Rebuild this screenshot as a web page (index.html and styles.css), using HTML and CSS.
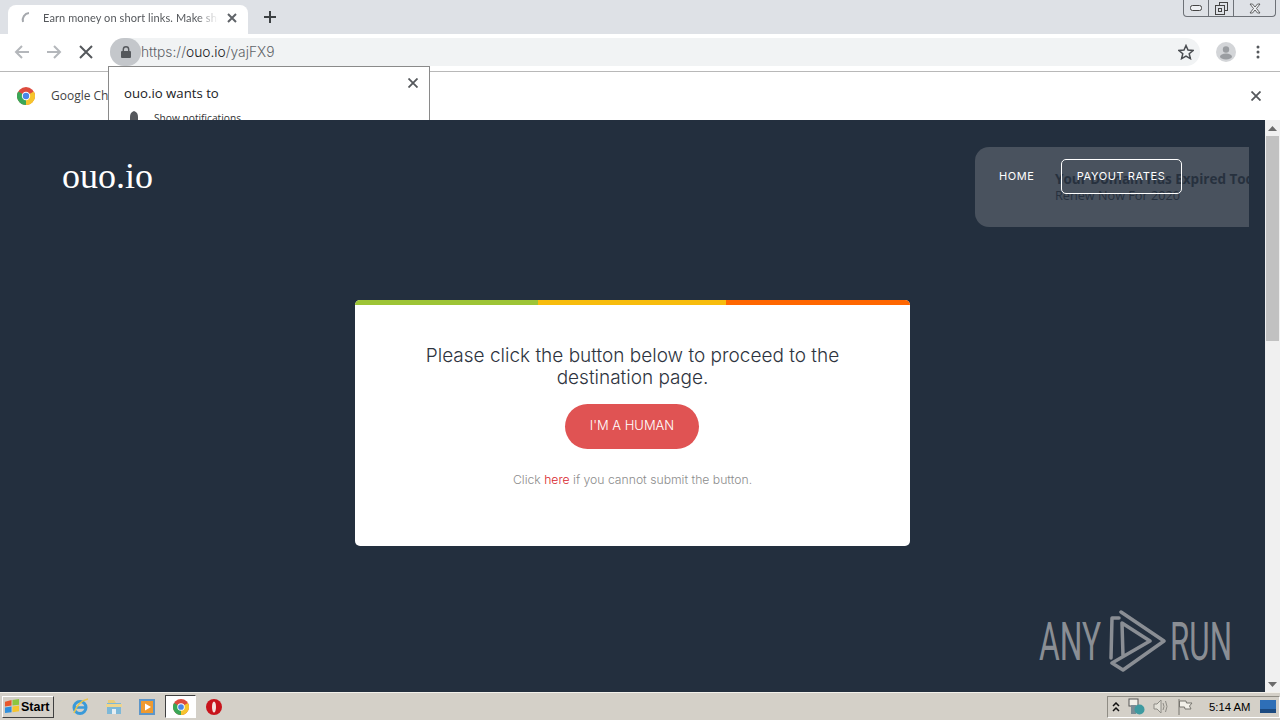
FILE: index.html
```html
<!DOCTYPE html>
<html lang="en">
<head>
    <meta charset="UTF-8">
    <title>Earn money on short links. Make short links</title>
    <link rel="stylesheet" href="styles.css">
</head>
<body>

<div class="browser">
    <div class="tabstrip">
        <div class="tab">
            <svg class="spinner" width="16" height="16" viewBox="0 0 16 16"><path d="M3 12 A7 7 0 0 1 9 3" fill="none" stroke="#a5a8ad" stroke-width="2"/></svg>
            <span class="tab-title">Earn money on short links. Make short links</span>
            <svg class="tab-close" width="10" height="10" viewBox="0 0 10 10"><path d="M1 1 L9 9 M9 1 L1 9" stroke="#5f6368" stroke-width="2"/></svg>
        </div>
        <svg class="new-tab" width="12" height="12" viewBox="0 0 12 12"><path d="M6 0 V12 M0 6 H12" stroke="#3c4043" stroke-width="2"/></svg>
        <div class="win-controls">
            <div class="win-btn"><svg width="12" height="6" viewBox="0 0 12 6"><rect x="0.5" y="0.5" width="11" height="5" rx="2" fill="#eef0f3" stroke="#444"/></svg></div>
            <div class="win-btn"><svg width="13" height="13" viewBox="0 0 13 13"><rect x="4.5" y="0.5" width="8" height="8" fill="none" stroke="#444"/><rect x="0.5" y="3.5" width="9" height="9" fill="#dee1e6" stroke="#444"/><rect x="3.5" y="6.5" width="3" height="3" fill="none" stroke="#444"/></svg></div>
            <div class="win-btn win-close"><svg width="12" height="11" viewBox="0 0 12 11"><path d="M1 1 H3.5 L6 4 L8.5 1 H11 L7.5 5.5 L11 10 H8.5 L6 7 L3.5 10 H1 L4.5 5.5 Z" fill="#eef0f3" stroke="#444" stroke-width="0.8"/></svg></div>
        </div>
    </div>

    <div class="toolbar">
        <svg class="tool-icon" width="16" height="16" viewBox="0 0 16 16"><path d="M15 8 H2 M8 2 L2 8 L8 14" fill="none" stroke="#b4b7bb" stroke-width="2"/></svg>
        <svg class="tool-icon" width="16" height="16" viewBox="0 0 16 16"><path d="M1 8 H14 M8 2 L14 8 L8 14" fill="none" stroke="#b4b7bb" stroke-width="2"/></svg>
        <svg class="tool-icon" width="14" height="14" viewBox="0 0 14 14"><path d="M1 1 L13 13 M13 1 L1 13" stroke="#55585c" stroke-width="2"/></svg>
        <div class="omnibox">
            <div class="lock-chip">
                <svg width="10" height="12" viewBox="0 0 10 12"><rect x="0" y="5" width="10" height="7" rx="1" fill="#55585c"/><path d="M2.3 5 V3.4 A2.7 2.7 0 0 1 7.7 3.4 V5" fill="none" stroke="#55585c" stroke-width="1.4"/></svg>
            </div>
            <span class="url"><span class="url-dim">https://</span>ouo.io<span class="url-dim">/yajFX9</span></span>
            <svg class="star" width="16" height="16" viewBox="0 0 16 16"><path d="M8 1.5 L10 6 L15 6.5 L11.2 9.7 L12.4 14.6 L8 12 L3.6 14.6 L4.8 9.7 L1 6.5 L6 6 Z" fill="none" stroke="#4a4d51" stroke-width="1.5"/></svg>
        </div>
        <svg class="avatar" width="20" height="20" viewBox="0 0 20 20"><circle cx="10" cy="10" r="10" fill="#d3d5d8"/><circle cx="10" cy="7.5" r="3.2" fill="#9a9da1"/><ellipse cx="10" cy="14.5" rx="6" ry="3" fill="#9a9da1"/></svg>
        <svg class="dots" width="4" height="14" viewBox="0 0 4 14"><circle cx="2" cy="2" r="1.5" fill="#55585c"/><circle cx="2" cy="7" r="1.5" fill="#55585c"/><circle cx="2" cy="12" r="1.5" fill="#55585c"/></svg>
    </div>

    <div class="infobar">
        <svg class="chrome-logo" width="18" height="18" viewBox="0 0 18 18">
            <circle cx="9" cy="9" r="9" fill="#dd4b3e"/>
            <path d="M9 9 L1.2 4.5 A9 9 0 0 0 9 18 Z" fill="#3aa757"/>
            <path d="M9 9 L9 18 A9 9 0 0 0 16.8 4.5 Z" fill="#f6c42d"/>
            <circle cx="9" cy="9" r="4.2" fill="#fff"/>
            <circle cx="9" cy="9" r="3.2" fill="#4a86e8"/>
        </svg>
        <span class="info-text">Google Chrome</span>
        <svg class="info-close" width="10" height="10" viewBox="0 0 10 10"><path d="M0.5 0.5 L9.5 9.5 M9.5 0.5 L0.5 9.5" stroke="#55585c" stroke-width="1.8"/></svg>
    </div>

    <div class="permission-popup">
        <svg class="popup-close" width="10" height="10" viewBox="0 0 10 10"><path d="M0.5 0.5 L9.5 9.5 M9.5 0.5 L0.5 9.5" stroke="#55585c" stroke-width="1.8"/></svg>
        <div class="popup-title">ouo.io wants to</div>
        <div class="popup-row">
            <svg width="12" height="14" viewBox="0 0 12 14"><path d="M6 0 C9 1 10 3 10 6 V10 L12 12 H0 L2 10 V6 C2 3 3 1 6 0 Z" fill="#55585c"/></svg>
            <span>Show notifications</span>
        </div>
    </div>
</div>

<div class="viewport">
    <div class="site">
        <header class="site-header">
            <div class="logo">ouo.io</div>
            <nav class="site-nav">
                <div class="expired">
                    <strong>Your Domain Has Expired Today</strong>
                    <span>Renew Now For 2020</span>
                </div>
                <a class="nav-link">HOME</a>
                <a class="nav-link boxed">PAYOUT RATES</a>
            </nav>
        </header>

        <main class="card">
            <div class="card-bar">
                <div class="bar-green"></div>
                <div class="bar-yellow"></div>
                <div class="bar-orange"></div>
            </div>
            <h1>Please click the button below to proceed to the destination page.</h1>
            <button class="btn-human">I'M A HUMAN</button>
            <p class="card-note">Click <a>here</a> if you cannot submit the button.</p>
        </main>

        <svg class="watermark" width="194" height="64" viewBox="0 0 194 64">
            <text x="1" y="50" class="wm-text" textLength="62" lengthAdjust="spacingAndGlyphs">ANY</text>
            <text x="132" y="50" class="wm-text" textLength="62" lengthAdjust="spacingAndGlyphs">RUN</text>
            <g fill="none" stroke="#8a8e94" stroke-width="3.5" stroke-linejoin="round" stroke-linecap="round">
                <path d="M83 2 L126 31 L85 60 L74 53 L112 31 L84 13 L85 46"/>
                <path d="M81 8 L74 8 L73 48"/>
            </g>
        </svg>
    </div>
    <div class="scrollbar">
        <div class="scroll-arrow"><svg width="9" height="5" viewBox="0 0 9 5"><path d="M4.5 0 L9 5 H0 Z" fill="#6b6b6b"/></svg></div>
        <div class="scroll-track"><div class="scroll-thumb"></div></div>
        <div class="scroll-arrow"><svg width="9" height="5" viewBox="0 0 9 5"><path d="M0 0 H9 L4.5 5 Z" fill="#6b6b6b"/></svg></div>
    </div>
</div>

<footer class="taskbar">
    <button class="start-btn">
        <svg width="16" height="15" viewBox="0 0 17 16">
            <path d="M1 3 L8 1 V7 L1 8 Z" fill="#e8582c"/>
            <path d="M9 1 L16 0 V6 L9 7 Z" fill="#8cc63f"/>
            <path d="M1 9 L8 8 V14 L1 15 Z" fill="#2f8fdd"/>
            <path d="M9 8 L16 7 V13 L9 14 Z" fill="#f7c52d"/>
        </svg>
        Start
    </button>
    <div class="quick-launch">
        <svg width="18" height="18" viewBox="0 0 18 18"><circle cx="9" cy="9.5" r="6" fill="none" stroke="#3a9ad9" stroke-width="3"/><path d="M4 9.5 H14" stroke="#3a9ad9" stroke-width="2.5"/><path d="M3 15 C6 6 12 2 17 1" fill="none" stroke="#e9c54b" stroke-width="1.5"/></svg>
        <svg width="18" height="18" viewBox="0 0 18 18"><path d="M2 5 H16 V16 H2 Z" fill="#7db8d8"/><path d="M3 2 H9 L11 5 H3 Z" fill="#e8cc7a"/><path d="M1 6 H17 V9 H1 Z" fill="#eed58d"/><rect x="7" y="11" width="4" height="5" fill="#e6eef2"/></svg>
        <svg width="18" height="18" viewBox="0 0 18 18"><rect x="1" y="1" width="16" height="16" fill="#5d96c9"/><rect x="3" y="3" width="12" height="12" fill="#ef9a2f"/><path d="M7 5.5 L13 9 L7 12.5 Z" fill="#fff"/></svg>
        <div class="task-active">
            <svg width="16" height="16" viewBox="0 0 18 18">
                <circle cx="9" cy="9" r="9" fill="#dd4b3e"/>
                <path d="M9 9 L1.2 4.5 A9 9 0 0 0 9 18 Z" fill="#3aa757"/>
                <path d="M9 9 L9 18 A9 9 0 0 0 16.8 4.5 Z" fill="#f6c42d"/>
                <circle cx="9" cy="9" r="4.2" fill="#fff"/>
                <circle cx="9" cy="9" r="3.2" fill="#4a86e8"/>
            </svg>
        </div>
        <svg class="opera" width="16" height="16" viewBox="0 0 16 16"><circle cx="8" cy="8" r="8" fill="#c8141c"/><ellipse cx="8" cy="8" rx="2" ry="5.6" fill="#f4e4e0"/></svg>
    </div>
    <div class="tray">
        <svg width="8" height="10" viewBox="0 0 8 10"><path d="M1 4 L4 1 L7 4 M1 9 L4 6 L7 9" fill="none" stroke="#111" stroke-width="1.5"/></svg>
        <svg width="17" height="17" viewBox="0 0 17 17"><rect x="1" y="1" width="9" height="7" fill="#f1efe8" stroke="#555"/><rect x="3" y="7" width="5" height="9" fill="#7a8c94"/><circle cx="11.5" cy="11.5" r="5" fill="#3e9aa0"/></svg>
        <svg width="16" height="15" viewBox="0 0 16 15"><path d="M1 5 H4 L8 1 V14 L4 10 H1 Z" fill="#e4e2da" stroke="#8e8c86"/><path d="M10 4 Q12 7.5 10 11 M12.5 2 Q15.5 7.5 12.5 13" fill="none" stroke="#8e8c86"/></svg>
        <svg width="16" height="16" viewBox="0 0 16 16"><path d="M2 0 V16" stroke="#77756f"/><path d="M2.5 2 H9 L9.5 4 H15 L12.5 7 L14 10 H8 L7.5 8 H2.5 Z" fill="#f2f0e9" stroke="#77756f"/></svg>
        <span class="clock">5:14 AM</span>
        <svg class="show-desktop" width="16" height="13" viewBox="0 0 16 13"><rect width="16" height="13" fill="#2e6fb7"/><rect y="9" width="16" height="4" fill="#1c4a80"/></svg>
    </div>
</footer>

</body>
</html>
```

FILE: styles.css
```css
* { box-sizing: border-box; }

html, body {
    margin: 0;
    padding: 0;
    height: 720px;
    overflow: hidden;
}

body {
    display: flex;
    flex-direction: column;
    font-family: "Open Sans", sans-serif;
}

/* --- BROWSER CHROME --- */
.browser {
    position: relative;
    height: 120px;
    flex: none;
    overflow: hidden;
    background: #fff;
}

.tabstrip {
    height: 34px;
    background: #dee1e6;
    display: flex;
    align-items: flex-end;
    padding-left: 8px;
}

.tab {
    width: 240px;
    height: 29px;
    background: #fff;
    border-radius: 8px 8px 0 0;
    display: flex;
    align-items: center;
    padding: 0 11px 4px 12px;
}

.spinner { flex: none; }

.tab-title {
    flex: 1;
    margin-left: 7px;
    font-family: "Lato", sans-serif;
    font-size: 11px;
    letter-spacing: 0.1px;
    color: #55585c;
    white-space: nowrap;
    overflow: hidden;
    -webkit-mask-image: linear-gradient(to right, #000 88%, transparent);
    mask-image: linear-gradient(to right, #000 88%, transparent);
}

.tab-close { flex: none; margin-left: 9px; }

.new-tab { margin: 0 0 11px 16px; }

.win-controls {
    margin-left: auto;
    margin-right: 4px;
    align-self: flex-start;
    display: flex;
    height: 17px;
    width: 93px;
    border: 1px solid #6d7177;
    border-top: none;
    border-radius: 0 0 4px 4px;
}

.win-btn {
    width: 25px;
    display: flex;
    align-items: center;
    justify-content: center;
    border-right: 1px solid #6d7177;
}

.win-btn.win-close { flex: 1; border-right: none; }

.toolbar {
    height: 38px;
    display: flex;
    align-items: center;
    border-bottom: 1px solid #b8b8b8;
    padding: 0 0 1px 14px;
}

.tool-icon { flex: none; margin-right: 16px; }

.tool-icon:nth-child(3) { margin: 0 16px 0 1px; }

.omnibox {
    width: 1090px;
    margin-left: 1px;
    height: 28px;
    border-radius: 14px;
    background: #f1f3f4;
    display: flex;
    align-items: center;
}

.lock-chip {
    width: 31px;
    height: 28px;
    border-radius: 14px;
    background: #c4c7cb;
    display: flex;
    align-items: center;
    justify-content: center;
}

.url {
    font-family: "Inter", sans-serif;
    font-weight: 300;
    font-size: 13.8px;
    color: #202124;
}

.url-dim { color: #5f6368; }

.star { margin-left: auto; margin-right: 6px; }

.avatar { flex: none; margin-left: 16px; }

.dots { flex: none; margin-left: 20px; }

.infobar {
    height: 48px;
    display: flex;
    align-items: center;
    padding-left: 17px;
}

.chrome-logo { flex: none; }

.info-text {
    margin: -2px 0 0 16px;
    font-size: 12px;
    color: #444;
}

.info-close { margin-left: auto; margin-right: 19px; }

.permission-popup {
    position: absolute;
    left: 108px;
    top: 66px;
    width: 322px;
    height: 90px;
    background: #fff;
    border: 1px solid #8a8a8a;
    padding: 17px 15px;
}

.popup-close { position: absolute; top: 11px; right: 11px; }

.popup-title {
    font-size: 13.2px;
    line-height: 18px;
    color: #202124;
}

.popup-row {
    display: flex;
    align-items: center;
    gap: 14px;
    margin-top: 9px;
    padding-left: 4px;
    font-size: 10.2px;
    color: #333;
}

/* --- PAGE --- */
.viewport {
    flex: 1;
    display: flex;
    min-height: 0;
    background: #232f3e;
}

.site {
    position: relative;
    flex: 1;
}

.site-header {
    display: flex;
    justify-content: space-between;
    padding: 27px 16px 0 62px;
}

.logo {
    font-family: "Liberation Serif", serif;
    font-size: 36px;
    line-height: 58px;
    color: #fff;
}

.site-nav {
    position: relative;
    width: 274px;
    height: 80px;
    overflow: hidden;
    border-radius: 14px 0 0 14px;
    background: #49525e;
    display: flex;
    align-items: flex-start;
    padding: 12px 0 0 24px;
    font-family: "Inter", sans-serif;
    font-size: 11px;
    letter-spacing: 0.6px;
    color: #fff;
}

.expired {
    position: absolute;
    left: 80px;
    top: 23px;
    width: 240px;
    color: #27313e;
    font-family: "Open Sans", sans-serif;
    letter-spacing: 0;
    white-space: nowrap;
}

.expired strong { display: block; font-size: 13.5px; line-height: 18px; }

.expired span { display: block; font-size: 12.7px; line-height: 15px; }

.nav-link {
    position: relative;
    line-height: 35px;
}

.nav-link.boxed {
    margin-left: 26px;
    width: 121px;
    text-align: center;
    border: 1px solid #fff;
    border-radius: 5px;
    line-height: 33px;
}

.card {
    width: 555px;
    height: 246px;
    margin: 73px auto 0;
    background: #fff;
    border-radius: 5px;
    overflow: hidden;
    text-align: center;
    font-family: "Inter", sans-serif;
}

.card-bar { display: flex; height: 5px; }

.bar-green { width: 183px; background: #9dc436; }
.bar-yellow { width: 188px; background: #f7bc0d; }
.bar-orange { flex: 1; background: #ff6600; }

.card h1 {
    margin: 40px 0 0;
    padding: 0 60px;
    font-size: 19px;
    line-height: 22px;
    font-weight: 300;
    color: #2e3440;
}

.btn-human {
    display: block;
    margin: 15px 0 0 210px;
    width: 134px;
    height: 45px;
    padding: 0 0 3px;
    border: none;
    border-radius: 23px;
    background: #e05353;
    color: #fff;
    font-family: "Inter", sans-serif;
    font-size: 13px;
    font-weight: 300;
}

.card-note {
    margin: 23px 0 0;
    font-size: 12.2px;
    line-height: 16px;
    font-weight: 300;
    color: #8c8c8c;
}

.card-note a { color: #d8232a; }

.watermark {
    position: absolute;
    left: 1038px;
    top: 490px;
}

.wm-text {
    font-family: "Roboto", sans-serif;
    font-weight: 400;
    font-size: 54px;
    fill: #8a8e94;
}

.scrollbar {
    width: 15px;
    flex: none;
    background: #f0f0f0;
    display: flex;
    flex-direction: column;
    padding: 0 1px;
}

.scroll-arrow {
    height: 16px;
    flex: none;
    display: flex;
    align-items: center;
    justify-content: center;
}

.scroll-track { flex: 1; }

.scroll-thumb {
    height: 205px;
    background: #c1c1c1;
}

/* --- TASKBAR --- */
.taskbar {
    height: 28px;
    flex: none;
    background: #d4d0c8;
    border-top: 1px solid #f2f0ea;
    display: flex;
    align-items: center;
    padding-left: 2px;
}

.start-btn {
    width: 52px;
    height: 22px;
    padding: 0 0 0 1px;
    display: flex;
    align-items: center;
    gap: 1px;
    background: #d4d0c8;
    border: 1px solid;
    border-color: #fff #404040 #404040 #fff;
    font-family: "Liberation Sans", sans-serif;
    font-size: 12.5px;
    font-weight: bold;
    color: #000;
}

.quick-launch {
    display: flex;
    align-items: center;
    margin-left: 17px;
}

.quick-launch > svg { margin-right: 15.5px; flex: none; }

.task-active {
    width: 31px;
    height: 23px;
    margin-left: -6.5px;
    background: #fff;
    border: 1px solid;
    border-color: #404040 #fff #fff #404040;
    display: flex;
    align-items: center;
    justify-content: center;
}

.quick-launch .opera { margin-left: 10px; margin-right: 0; }

.tray {
    margin-left: auto;
    width: 173px;
    height: 22px;
    border: 1px solid;
    border-color: #8f8c84 #fff #fff #8f8c84;
    display: flex;
    align-items: center;
    gap: 8px;
    padding-left: 4px;
}

.clock {
    margin-left: 8px;
    font-family: "Liberation Sans", sans-serif;
    font-size: 11.3px;
    color: #000;
    white-space: nowrap;
}

.show-desktop { margin-left: 2px; flex: none; }
```
